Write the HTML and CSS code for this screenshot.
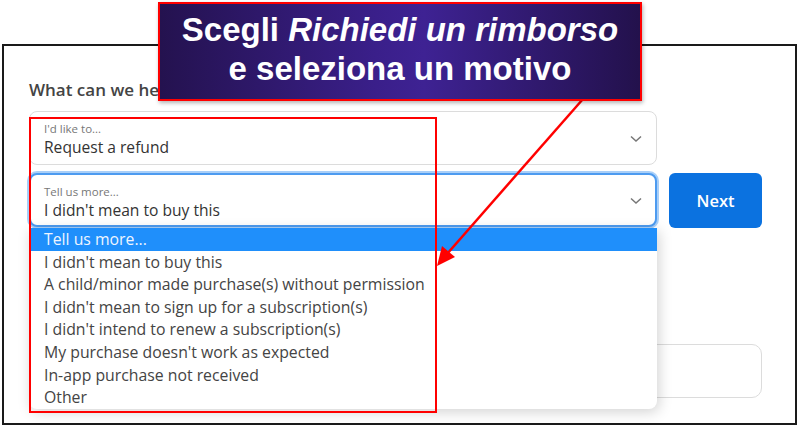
FILE: index.html
```html
<!DOCTYPE html>
<html lang="it">
<head>
  <meta charset="UTF-8">
  <meta name="viewport" content="width=device-width, initial-scale=1.0">
  <title>Richiedi un rimborso</title>
  <link rel="stylesheet" href="styles.css">
</head>
<body>

<div class="frame">
  <h3 class="question">What can we help you with?</h3>

  <div class="select">
    <div class="select-label">I'd like to...</div>
    <div class="select-value">Request a refund</div>
    <svg class="chevron" width="12" height="8" viewBox="0 0 12 8"><polyline points="1,1.5 6,6 11,1.5" fill="none" stroke="#777" stroke-width="1.5"/></svg>
  </div>

  <div class="row">
    <div class="select focused">
      <div class="select-label">Tell us more...</div>
      <div class="select-value">I didn't mean to buy this</div>
      <svg class="chevron" width="12" height="8" viewBox="0 0 12 8"><polyline points="1,1.5 6,6 11,1.5" fill="none" stroke="#777" stroke-width="1.5"/></svg>

      <ul class="options">
        <li class="active">Tell us more...</li>
        <li>I didn't mean to buy this</li>
        <li>A child/minor made purchase(s) without permission</li>
        <li>I didn't mean to sign up for a subscription(s)</li>
        <li>I didn't intend to renew a subscription(s)</li>
        <li>My purchase doesn't work as expected</li>
        <li>In-app purchase not received</li>
        <li>Other</li>
      </ul>
    </div>
    <button class="next">Next</button>
  </div>

  <div class="textbox"></div>
</div>

<!-- annotation layer -->
<div class="highlight"></div>

<svg class="arrow" width="800" height="429" viewBox="0 0 800 429">
  <line x1="583" y1="99" x2="447" y2="254" stroke="#f00" stroke-width="2.5"/>
  <polygon points="437,266 442,246 455,257" fill="#f00"/>
</svg>

<div class="callout">
  <div>Scegli <em>Richiedi un rimborso</em></div>
  <div>e seleziona un motivo</div>
</div>

</body>
</html>
```

FILE: styles.css
```css
body {
  margin: 0;
  background: #fff;
  font-family: "Open Sans", "Noto Sans", sans-serif;
  color: #333;
  width: 800px;
  height: 429px;
  overflow: hidden;
  position: relative;
}

.frame {
  box-sizing: border-box;
  margin: 44px 0 0 2px;
  width: 795px;
  height: 381px;
  border: 2px solid #1a1a1a;
  padding: 33px 32px 0 25px;
}

.question {
  margin: 0 0 10px 0;
  font-size: 17px;
  line-height: 22px;
  font-weight: 600;
  color: #444;
}

.select {
  box-sizing: border-box;
  position: relative;
  width: 628px;
  height: 54px;
  border: 1px solid #dcdcdc;
  border-radius: 8px;
  padding: 10px 14px 0 14px;
  background: #fff;
}
.select-label {
  font-size: 11.5px;
  line-height: 14px;
  color: #777;
}
.select-value {
  font-size: 15.6px;
  line-height: 23px;
  color: #333;
}
.chevron {
  position: absolute;
  right: 14px;
  top: 23px;
}

.row {
  display: flex;
  gap: 12px;
  margin-top: 8px;
}
.select.focused {
  border: 2px solid #4d9bf0;
  box-shadow: 0 0 0 2px #a9cff8;
  padding: 10px 13px 0 13px;
}
.select.focused .chevron {
  right: 13px;
  top: 22px;
}

.next {
  width: 93px;
  height: 55px;
  border: none;
  border-radius: 6px;
  background: #0b72e0;
  color: #fff;
  font-family: inherit;
  font-size: 16.5px;
  font-weight: 600;
}

.options {
  position: absolute;
  left: -2px;
  top: 53px;
  width: 628px;
  margin: 0;
  padding: 0;
  list-style: none;
  background: #fff;
  border-radius: 0 0 8px 8px;
  box-shadow: 2px 3px 14px rgba(0, 0, 0, 0.18);
  overflow: hidden;
  z-index: 2;
}
.options li {
  height: 22.6px;
  line-height: 23px;
  padding-left: 15px;
  font-size: 15.8px;
  color: #444;
}
.options li.active {
  background: #1f8ffb;
  color: #eef5ff;
}

.textbox {
  box-sizing: border-box;
  width: 733px;
  height: 54px;
  margin-top: 116px;
  border: 1px solid #dcdcdc;
  border-radius: 10px;
}

.highlight {
  position: absolute;
  left: 29px;
  top: 117px;
  width: 404px;
  height: 292px;
  border: 2px solid #f00;
  z-index: 3;
}

.arrow {
  position: absolute;
  left: 0;
  top: 0;
  z-index: 4;
}

.callout {
  position: absolute;
  left: 158px;
  top: 2px;
  box-sizing: border-box;
  width: 484px;
  height: 99px;
  border: 2px solid #f00;
  background: linear-gradient(90deg, #24124f 0%, #3a1f8a 45%, #3e2293 55%, #23114c 100%);
  box-shadow: 1px 2px 4px rgba(0, 0, 0, 0.3);
  color: #fff;
  font-family: "Liberation Sans", Arial, sans-serif;
  font-weight: bold;
  font-size: 33px;
  line-height: 39px;
  text-align: center;
  padding-top: 6px;
  z-index: 5;
}
.callout em {
  font-style: italic;
}
```
